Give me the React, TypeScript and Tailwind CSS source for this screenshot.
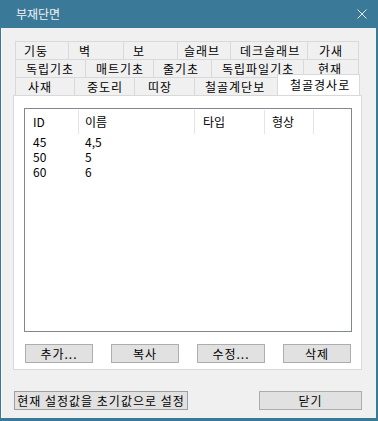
import React from "react";

const rows = [
  [
    { label: "기둥", w: "w-[53px]", pl: "pl-[8px]" },
    { label: "벽", w: "w-[55px]", pl: "pl-[10px]" },
    { label: "보", w: "w-[54px]", pl: "pl-[9px]" },
    { label: "슬래브", w: "w-[53px]", pl: "pl-[6px]" },
    { label: "데크슬래브", w: "w-[77px]", pl: "pl-[9px]" },
    { label: "가새", w: "w-[52px]", pl: "pl-[11px]" },
  ],
  [
    { label: "독립기초", w: "w-[70px]", pl: "pl-[10px]" },
    { label: "매트기초", w: "w-[68px]", pl: "pl-[10px]" },
    { label: "줄기초", w: "w-[58px]", pl: "pl-[9px]" },
    { label: "독립파일기초", w: "w-[92px]", pl: "pl-[10px]" },
    { label: "현재", w: "w-[56px]", pl: "pl-[14px]" },
  ],
];

const row3 = [
  { label: "사재", w: "w-[59px]", pl: "pl-[12px]" },
  { label: "중도리", w: "w-[60px]", pl: "pl-[12px]" },
  { label: "띠장", w: "w-[60px]", pl: "pl-[13px]" },
  { label: "철골계단보", w: "w-[83px]", pl: "pl-[10px]" },
];

const cols = [
  { label: "ID", w: "w-[54px]", pl: "pl-[8px]" },
  { label: "이름", w: "w-[116px]", pl: "pl-[6px]" },
  { label: "타입", w: "w-[70px]", pl: "pl-[8px]" },
  { label: "형상", w: "w-[49px]", pl: "pl-[7px]" },
];

const data = [
  ["45", "4,5"],
  ["50", "5"],
  ["60", "6"],
];

function Btn({ label, w }: { label: string; w: string }) {
  return (
    <div
      className={`${w} h-[19px] bg-[#e1e1e1] border border-[#adadad] flex items-center justify-center text-[12px] tracking-[1px] text-black`}
    >
      {label}
    </div>
  );
}

export default function App() {
  return (
    <div className="w-[378px] h-[421px] bg-[#3a7997] flex flex-col font-['Noto_Sans_CJK_KR',sans-serif] text-[12px] leading-none text-black overflow-hidden">
      {/* Title bar */}
      <div className="h-[28px] flex items-center justify-between pl-[16px] pr-[10px] shrink-0">
        <span className="text-[#f2f2f2] text-[12px]">부재단면</span>
        <svg width="10" height="10" viewBox="0 0 10 10" className="mr-[1px]">
          <path d="M0.5 0.5 L9.5 9.5 M9.5 0.5 L0.5 9.5" stroke="#e8e8e8" strokeWidth="1" />
        </svg>
      </div>

      {/* Client area */}
      <div className="flex-1 ml-px mr-[2px] mb-[3px] bg-[#f0f0f0] border-l border-[#f8f8f8] pt-[13px] pl-[11px] flex flex-col">
        {/* Tabs */}
        <div className="w-[349px] flex flex-col">
          {rows.map((row, i) => (
            <div key={i} className="flex ml-[2px] h-[18px]">
              {row.map((t, j) => (
                <div
                  key={j}
                  className={`${t.w} ${t.pl} h-[18px] border-t border-l border-[#d9d9d9] ${
                    j === row.length - 1 ? "border-r" : ""
                  } flex items-center tracking-[1px]`}
                >
                  {t.label}
                </div>
              ))}
            </div>
          ))}
          <div className="flex ml-[2px] h-[18px]">
            {row3.map((t, j) => (
              <div
                key={j}
                className={`${t.w} ${t.pl} h-[18px] border-t border-l border-[#d9d9d9] flex items-center tracking-[1px]`}
              >
                {t.label}
              </div>
            ))}
            <div className="relative z-10 w-[83px] h-[21px] -mt-[3px] pl-[12px] bg-white border-t border-l border-r border-[#d9d9d9] flex items-center tracking-[1px]">
              철골경사로
            </div>
          </div>

          {/* Panel */}
          <div className="h-[275px] bg-white border border-[#d9d9d9] pt-[12px] pl-[10px] pr-[9px] flex flex-col">
            <div className="h-[224px] border border-[#828790] bg-white flex flex-col">
              <div className="h-[25px] flex items-stretch pt-px">
                {cols.map((c, i) => (
                  <div
                    key={i}
                    className={`${c.w} ${c.pl} border-r border-[#e5e5e5] flex items-center`}
                  >
                    {c.label}
                  </div>
                ))}
              </div>
              {data.map((r, i) => (
                <div key={i} className="h-[15px] flex items-center leading-[15px]">
                  <div className="w-[54px] pl-[8px]">{r[0]}</div>
                  <div className="pl-[6px]">{r[1]}</div>
                </div>
              ))}
            </div>
            <div className="mt-[12px] flex justify-between px-px">
              <Btn label="추가..." w="w-[68px]" />
              <Btn label="복사" w="w-[68px]" />
              <Btn label="수정..." w="w-[68px]" />
              <Btn label="삭제" w="w-[68px]" />
            </div>
          </div>
        </div>

        {/* Bottom buttons */}
        <div className="mt-[21px] w-[348px] ml-px flex justify-between">
          <div className="w-[174px] h-[19px] bg-[#e1e1e1] border border-[#a0a0a0] flex items-center justify-center tracking-[1px]">
            현재 설정값을 초기값으로 설정
          </div>
          <div className="w-[103px] h-[19px] bg-[#e1e1e1] border border-[#adadad] flex items-center justify-center tracking-[1px]">
            닫기
          </div>
        </div>
      </div>
    </div>
  );
}
